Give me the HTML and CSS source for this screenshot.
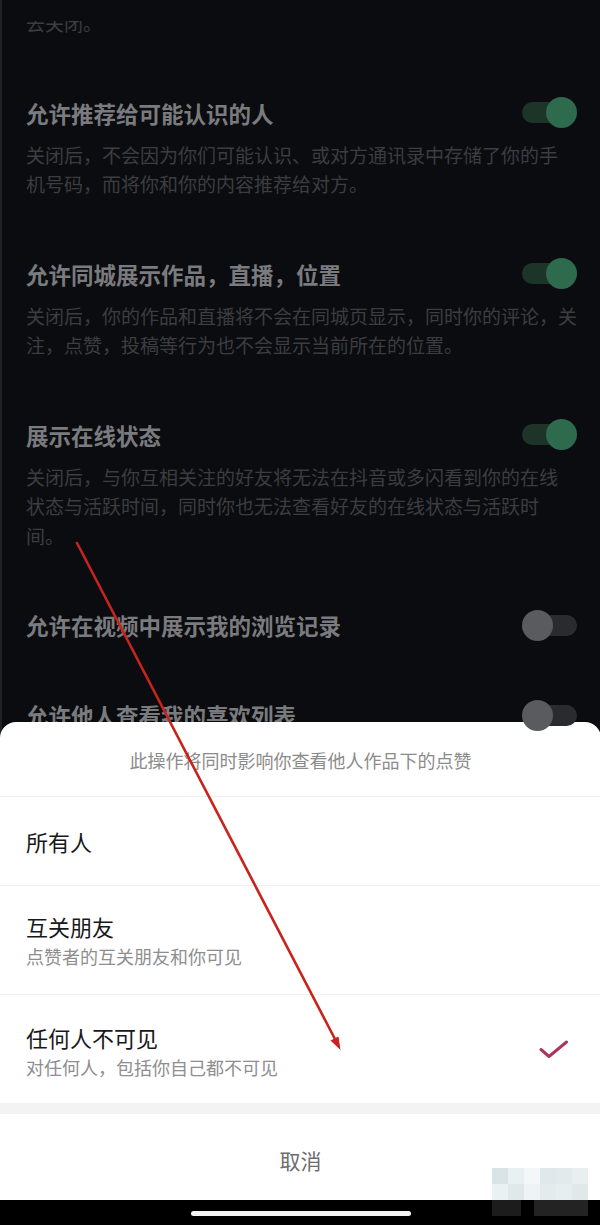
FILE: index.html
```html
<!DOCTYPE html>
<html lang="zh-CN">
<head>
<meta charset="utf-8">
<title>隐私设置</title>
<link rel="stylesheet" href="styles.css">
</head>
<body>
<div class="screen">
  <div class="page">
    <div class="topbar"></div>
    <div class="scroll">
      <div class="list">
        <p class="desc tail">去关闭。</p>

        <div class="item">
          <div class="item-head">
            <span class="item-title">允许推荐给可能认识的人</span>
            <span class="toggle on"><span class="knob"></span></span>
          </div>
          <p class="desc">关闭后，不会因为你们可能认识、或对方通讯录中存储了你的手<br>机号码，而将你和你的内容推荐给对方。</p>
        </div>

        <div class="item">
          <div class="item-head">
            <span class="item-title">允许同城展示作品，直播，位置</span>
            <span class="toggle on"><span class="knob"></span></span>
          </div>
          <p class="desc">关闭后，你的作品和直播将不会在同城页显示，同时你的评论，关<br>注，点赞，投稿等行为也不会显示当前所在的位置。</p>
        </div>

        <div class="item">
          <div class="item-head">
            <span class="item-title">展示在线状态</span>
            <span class="toggle on"><span class="knob"></span></span>
          </div>
          <p class="desc">关闭后，与你互相关注的好友将无法在抖音或多闪看到你的在线<br>状态与活跃时间，同时你也无法查看好友的在线状态与活跃时<br>间。</p>
        </div>

        <div class="item">
          <div class="item-head">
            <span class="item-title">允许在视频中展示我的浏览记录</span>
            <span class="toggle off"><span class="knob"></span></span>
          </div>
        </div>

        <div class="item">
          <div class="item-head">
            <span class="item-title">允许他人查看我的喜欢列表</span>
            <span class="toggle off"><span class="knob"></span></span>
          </div>
        </div>
      </div>
    </div>
  </div>

  <div class="sheet">
    <div class="sheet-head">此操作将同时影响你查看他人作品下的点赞</div>
    <div class="option opt-single">
      <div class="opt-text">
        <div class="opt-title">所有人</div>
      </div>
    </div>
    <div class="option">
      <div class="opt-text">
        <div class="opt-title">互关朋友</div>
        <div class="opt-sub">点赞者的互关朋友和你可见</div>
      </div>
    </div>
    <div class="option opt-last">
      <div class="opt-text">
        <div class="opt-title">任何人不可见</div>
        <div class="opt-sub">对任何人，包括你自己都不可见</div>
      </div>
      <svg class="check" width="30" height="20" viewBox="0 0 30 20" aria-hidden="true">
        <path d="M2 9.5 L10 16.5 L27.5 2" fill="none" stroke="#a9365f" stroke-width="3" stroke-linecap="round" stroke-linejoin="round"/>
      </svg>
    </div>
    <div class="band"></div>
    <div class="cancel">取消</div>
    <div class="homebar"><span class="indicator"></span></div>
  </div>

  <div class="mosaic" aria-hidden="true">
    <span class="m1"></span><span class="m2"></span><span class="m3"></span><span class="m4"></span>
    <span class="m5"></span><span class="m6"></span><span class="m7"></span><span class="m8"></span>
    <span class="m9"></span><span class="m10"></span><span class="m11"></span><span class="m12"></span>
  </div>

  <svg class="annotation" width="600" height="1225" viewBox="0 0 600 1225" aria-hidden="true">
    <line x1="77" y1="543" x2="336" y2="1041" stroke="#c9231d" stroke-width="2.6" stroke-linecap="round"/>
    <polygon points="340.5,1050 330.5,1040.5 338.5,1036.5" fill="#c9231d"/>
  </svg>
</div>
</body>
</html>
```

FILE: styles.css
```css
* {
  box-sizing: border-box;
}

html, body {
  margin: 0;
  padding: 0;
}

body {
  width: 600px;
  height: 1225px;
  overflow: hidden;
  background: #0b0c0f;
  font-family: "Noto Sans CJK SC", "Noto Sans", sans-serif;
}

.screen {
  position: relative;
  display: grid;
  width: 600px;
  height: 1225px;
  overflow: hidden;
}

.page,
.sheet {
  grid-area: 1 / 1;
}

/* dark settings page (dimmed by the modal mask) */
.page {
  display: flex;
  flex-direction: column;
  height: 1225px;
  background: #0b0c0f;
  border-left: 2px solid #1f2125;
}

.topbar {
  height: 21px;
  flex: none;
  background: #0b0c0f;
}

.scroll {
  flex: 1;
  overflow: hidden;
}

.list {
  display: flex;
  flex-direction: column;
  gap: 60px;
  margin-top: -13px;
  padding: 0 24px 0 24px;
}

.desc {
  margin: 12px 0 0;
  font-size: 19px;
  line-height: 29.5px;
  color: #3c3d41;
  white-space: nowrap;
}

.desc.tail {
  margin: 0;
}

.item-head {
  display: flex;
  align-items: center;
  justify-content: space-between;
  height: 30px;
}

.item-title {
  font-size: 22.5px;
  line-height: 30px;
  font-weight: 700;
  color: #7a7b7e;
}

.toggle {
  position: relative;
  display: flex;
  align-items: center;
  width: 55px;
  height: 31px;
  flex: none;
}

.toggle::before {
  content: "";
  display: block;
  width: 50px;
  height: 21px;
  border-radius: 11px;
  background: #1d3528;
}

.toggle .knob {
  position: absolute;
  top: 0;
  width: 31px;
  height: 31px;
  border-radius: 50%;
  background: #2e6a4d;
}

.toggle.on .knob {
  right: 0;
}

.toggle.off {
  justify-content: flex-end;
}

.toggle.off::before {
  background: #2a2b2f;
}

.toggle.off .knob {
  left: 0;
  background: #5a5b5f;
}

/* bottom sheet */
.sheet {
  align-self: end;
  display: flex;
  flex-direction: column;
  height: 503px;
  background: #ffffff;
  border-radius: 16px 16px 0 0;
}

.sheet-head {
  height: 75px;
  padding-top: 1px;
  display: flex;
  align-items: center;
  justify-content: center;
  border-bottom: 1px solid #efefef;
  font-size: 18px;
  color: #8b8b8b;
}

.option {
  display: flex;
  align-items: center;
  justify-content: space-between;
  height: 109px;
  padding: 0 32px 0 26px;
  border-bottom: 1px solid #efefef;
}

.option.opt-single {
  height: 89px;
}

.option.opt-last {
  height: 108px;
  padding-top: 3px;
  border-bottom: none;
}

.opt-text {
  display: flex;
  flex-direction: column;
  gap: 2px;
}

.opt-title {
  font-size: 22px;
  line-height: 30px;
  color: #17181c;
}

.opt-sub {
  font-size: 18px;
  line-height: 26px;
  color: #8e8e90;
}

.check {
  flex: none;
  margin-top: -2px;
}

.band {
  height: 11px;
  background: #f3f3f3;
}

.cancel {
  height: 86px;
  padding-top: 6px;
  display: flex;
  align-items: center;
  justify-content: center;
  font-size: 21px;
  color: #6d6d6f;
}

.homebar {
  height: 25px;
  background: #000000;
  display: flex;
  justify-content: center;
  padding-top: 11px;
}

.indicator {
  display: block;
  width: 220px;
  height: 5px;
  border-radius: 3px;
  background: #f4f4f4;
}

/* pixelated watermark in the corner */
.mosaic {
  position: absolute;
  left: 492px;
  top: 1168px;
  display: grid;
  grid-template-columns: repeat(6, 16px);
  grid-template-rows: 16px 16px 16px;
}

.mosaic span { display: block; }
.m1 { background: #d9e4e6; }
.m2 { background: #e8f0f1; }
.m3 { background: #f3f7f7; }
.m4 { background: #dfe8ea; }
.m5 { background: #e2eaec; }
.m6 { background: #e9eff0; }
.m7 { background: #eaf1f2; }
.m8 { background: #dfe9ea; }
.m9 { background: #eef4f4; }
.m10 { background: #e3ebec; }
.m11 { background: #e6eeef; }
.m12 { background: #e0e8e9; }

.mosaic::after {
  content: "";
  grid-column: 1 / 7;
  background: linear-gradient(90deg, #1c1c1d 0 30%, #000 30% 44%, #232324 44% 100%);
}

.annotation {
  position: absolute;
  left: 0;
  top: 0;
  pointer-events: none;
}
```
